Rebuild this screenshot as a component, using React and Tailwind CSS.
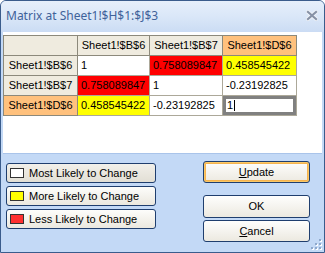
import React from "react";

const F = { fontFamily: '"Liberation Sans", Arial, sans-serif' };

function HeadCell({ children, orange }) {
  return (
    <td
      className={`h-[20px] p-0 border border-[#8c897b] text-center text-[11px] text-black ${orange ? "bg-[#ffc17d]" : "bg-[#efebdf]"}`}
    >
      {children}
    </td>
  );
}

function Cell({ children, bg = "bg-white" }) {
  return (
    <td className={`h-[20px] p-0 pl-[3px] border border-[#aca899] text-left text-[11px] text-black ${bg}`}>
      {children}
    </td>
  );
}

function LegendBtn({ swatch, label, pressed }) {
  return (
    <div
      className={`h-[20px] w-[150px] flex items-center rounded-[3px] border border-[#1f3e6e] ${pressed ? "bg-gradient-to-b from-[#f2f0ea] to-[#e2dfd5]" : "bg-gradient-to-b from-[#fdfdfb] to-[#ebe8df]"}`}
    >
      <div className={`ml-[3px] w-[14px] h-[10px] border border-[#333] ${swatch}`} />
      <span className="ml-[5px] text-[11px] text-black">{label}</span>
    </div>
  );
}

function ActBtn({ children, focus, h = "h-[22px]" }) {
  return (
    <div
      className={`${h} w-[107px] rounded-[3px] border border-[#1f3e6e] flex items-center justify-center text-[11px] text-black bg-gradient-to-b from-[#fefefd] to-[#ece9e0] ${focus ? "shadow-[inset_0_0_0_1px_#f9c869,inset_0_0_0_2px_#f6b44f]" : ""}`}
    >
      {children}
    </div>
  );
}

function Grip() {
  const dots = [
    [8, 0],
    [4, 4],
    [8, 4],
    [0, 8],
    [4, 8],
    [8, 8],
  ];
  return (
    <svg width="11" height="11" viewBox="0 0 11 11" className="absolute right-[2px] bottom-[2px]">
      {dots.map(([x, y], i) => (
        <g key={i}>
          <rect x={x + 1} y={y + 1} width="2" height="2" fill="#ffffff" />
          <rect x={x} y={y} width="2" height="2" fill="#8ea8cc" />
        </g>
      ))}
    </svg>
  );
}

export default function App() {
  return (
    <div
      style={F}
      className="relative w-[325px] h-[253px] flex flex-col bg-[#c3d9f6] border border-[#3a5c8c] rounded-t-[6px] overflow-hidden"
    >
      {/* title bar */}
      <div className="h-[31px] shrink-0 flex items-center justify-between pl-[5px] pr-[6px] bg-gradient-to-b from-[#e6effb] via-[#dae7f8] to-[#cbdcf4]">
        <span
          className="text-[12px] text-[#3f629a] -mt-[2px]"
          style={{ fontFamily: '"Noto Sans", "Open Sans", sans-serif' }}
        >
          Matrix at Sheet1!$H$1:$J$3
        </span>
        <svg width="12" height="11" viewBox="0 0 12 11" className="-mt-[2px]">
          <path d="M2 2 L10 9 M10 2 L2 9" stroke="#eef2f8" strokeWidth="4" strokeLinecap="square" />
          <path d="M2 2 L10 9 M10 2 L2 9" stroke="#8792a6" strokeWidth="2.2" strokeLinecap="square" />
        </svg>
      </div>

      {/* body */}
      <div className="flex-1 flex flex-col px-[2px] pb-[2px]">
        <div className="h-[122px] shrink-0 bg-white border-b border-[#a9c4ea] pt-[3px]">
          <table className="border-collapse table-fixed w-[293px]">
            <colgroup>
              <col className="w-[74px]" />
              <col className="w-[72px]" />
              <col className="w-[73px]" />
              <col className="w-[74px]" />
            </colgroup>
            <tbody>
              <tr>
                <HeadCell></HeadCell>
                <HeadCell>Sheet1!$B$6</HeadCell>
                <HeadCell>Sheet1!$B$7</HeadCell>
                <HeadCell orange>Sheet1!$D$6</HeadCell>
              </tr>
              <tr>
                <HeadCell>Sheet1!$B$6</HeadCell>
                <Cell>1</Cell>
                <Cell bg="bg-[#ff0000]">0.758089847</Cell>
                <Cell bg="bg-[#ffff00]">0.458545422</Cell>
              </tr>
              <tr>
                <HeadCell>Sheet1!$B$7</HeadCell>
                <Cell bg="bg-[#ff0000]">0.758089847</Cell>
                <Cell>1</Cell>
                <Cell>-0.23192825</Cell>
              </tr>
              <tr>
                <HeadCell orange>Sheet1!$D$6</HeadCell>
                <Cell bg="bg-[#ffff00]">0.458545422</Cell>
                <Cell>-0.23192825</Cell>
                <td className="h-[20px] p-0 border border-[#aca899] bg-white">
                  <div className="h-[19px] border-[3px] border-[#808080] flex items-center pl-[1px] text-[11px] text-black leading-none">
                    1<span className="inline-block w-px h-[11px] bg-black ml-px" />
                  </div>
                </td>
              </tr>
            </tbody>
          </table>
        </div>

        <div className="flex-1 flex justify-between pl-[3px] pr-[12px]">
          <div className="flex flex-col gap-[3px] pt-[9px]">
            <LegendBtn pressed swatch="bg-white" label="Most Likely to Change" />
            <LegendBtn swatch="bg-[#ffff00]" label="More Likely to Change" />
            <LegendBtn swatch="bg-[#ff3030]" label="Less Likely to Change" />
          </div>
          <div className="flex flex-col pt-[7px]">
            <ActBtn focus>
              <span><span className="underline">U</span>pdate</span>
            </ActBtn>
            <div className="h-[12px]" />
            <ActBtn h="h-[23px]">OK</ActBtn>
            <div className="h-[2px]" />
            <ActBtn>
              <span><span className="underline">C</span>ancel</span>
            </ActBtn>
          </div>
        </div>
      </div>
      <Grip />
    </div>
  );
}
